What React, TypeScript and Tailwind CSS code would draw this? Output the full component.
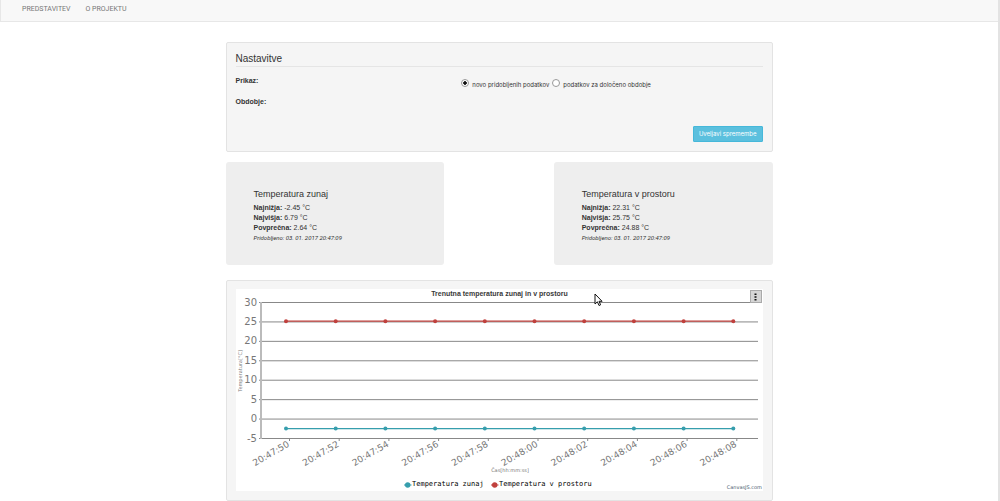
const times = [
  "20:47:50",
  "20:47:52",
  "20:47:54",
  "20:47:56",
  "20:47:58",
  "20:48:00",
  "20:48:02",
  "20:48:04",
  "20:48:06",
  "20:48:08",
];
const ticks = [30, 25, 20, 15, 10, 5, 0, -5];

const series = [
  { name: "Temperatura v prostoru", color: "#c0403d", value: 25.2 },
  { name: "Temperatura zunaj", color: "#369ead", value: -2.45 },
];

const yPos = (v: number) => 13.5 + ((30 - v) * 136) / 35;
const xPos = (i: number) => 50 + i * 49.7;

type Stats = { title: string; min: string; max: string; avg: string; taken: string };

function StatBox({ title, min, max, avg, taken, className }: Stats & { className: string }) {
  return (
    <section className={`rounded-[3px] bg-[#eee] px-7 pt-[27px] pb-[22px] leading-[10px] ${className}`}>
      <h3 className="mb-1 text-[9px] leading-[10px]">{title}</h3>
      <p><b>Najnižja:</b> {min} °C</p>
      <p><b>Najvišja:</b> {max} °C</p>
      <p><b>Povprečna:</b> {avg} °C</p>
      <p className="font-[Roboto,sans-serif] text-[6px] leading-[10px] italic">Pridobljeno: {taken}</p>
    </section>
  );
}

function Radio({ id, label, checked }: { id: string; label: string; checked?: boolean }) {
  return (
    <span className="flex items-baseline gap-[3px]">
      <input
        type="radio"
        name="prikaz"
        id={id}
        defaultChecked={checked}
        className="size-2 appearance-none rounded-full border border-[#999] bg-white checked:bg-[radial-gradient(circle,#111_0_1.5px,transparent_2px)]"
      />
      <label htmlFor={id}>{label}</label>
    </span>
  );
}

function Chart() {
  return (
    <svg viewBox="0 0 527 202" className="block w-full bg-white" fontFamily="'DejaVu Sans', sans-serif">
      <text x="263.5" y="7" textAnchor="middle" fontSize="7" fontWeight="bold" fill="#3a3a3a" fontFamily="'Liberation Sans', sans-serif">
        Trenutna temperatura zunaj in v prostoru
      </text>

      {ticks.map((t) => (
        <g key={t}>
          <line x1="23" x2="522" y1={yPos(t)} y2={yPos(t)} stroke="#888" />
          <text x="21" y={yPos(t) + 3} textAnchor="end" fontSize="10" fill="#777">{t}</text>
        </g>
      ))}
      <line x1="25" x2="25" y1="13" y2="150" stroke="#bbb" strokeWidth="2" />

      {times.map((t, i) => (
        <g key={t}>
          <line x1={xPos(i) + 3.5} x2={xPos(i) + 3.5} y1="149" y2="152" stroke="#888" />
          <text transform={`translate(${xPos(i) + 4} 157) rotate(-30)`} textAnchor="end" fontSize="9" fill="#777">{t}</text>
        </g>
      ))}

      {series.map((s) => (
        <g key={s.name} fill={s.color}>
          <line x1={xPos(0)} x2={xPos(9)} y1={yPos(s.value)} y2={yPos(s.value)} stroke={s.color} strokeWidth="1.4" />
          {times.map((t, i) => (
            <circle key={t} cx={xPos(i)} cy={yPos(s.value)} r="2" />
          ))}
        </g>
      ))}

      <text transform="translate(6 82) rotate(-90)" textAnchor="middle" fontSize="5" fill="#777">Temperatura[°C]</text>
      <text x="274" y="183" textAnchor="middle" fontSize="5" fill="#777">Čas[hh:mm:ss]</text>

      <g fontSize="7" fontFamily="'DejaVu Sans Mono', monospace">
        <path d="M168 196h7.500" stroke="#369ead" />
        <circle cx="171.700" cy="196" r="2.700" fill="#369ead" />
        <text x="176" y="197">Temperatura zunaj</text>
        <path d="M255 196h7.500" stroke="#c0403d" />
        <circle cx="258.700" cy="196" r="2.700" fill="#c0403d" />
        <text x="263" y="197">Temperatura v prostoru</text>
      </g>
      <text x="526" y="200" textAnchor="end" fontSize="5" fill="#4a6070">CanvasJS.com</text>
    </svg>
  );
}

export default function App() {
  return (
    <div className="min-h-screen border-r-2 border-[#e3e3e3] bg-white font-['Liberation_Sans',Arial,sans-serif] text-[7px] leading-[10px] text-[#333]">
      <nav className="flex gap-[15px] border-b border-l border-[#e7e7e7] bg-[#f8f8f8] px-[21px] pt-1 pb-[7px] font-[Roboto,sans-serif] text-[#777]">
        <a href="#predstavitev">PREDSTAVITEV</a>
        <a href="#projekt">O PROJEKTU</a>
      </nav>

      <div className="pt-5">
        <main className="mx-auto max-w-[547px]">
          <form className="rounded-[2px] border border-[#e3e3e3] bg-[#f5f5f5] px-[9px] pt-2 pb-[9px]">
            <h2 className="border-b border-[#e5e5e5] text-[10px] leading-[15px]">Nastavitve</h2>
            <div className="mt-[9px] grid min-h-3.5 grid-cols-[3fr_4fr]">
              <b>Prikaz:</b>
              <div className="flex gap-[3px] pt-[3px] font-[Inter,sans-serif] text-[6px] leading-[10px]">
                <Radio id="novi" label="novo pridobljenih podatkov" checked />
                <Radio id="obdobje" label="podatkov za določeno obdobje" />
              </div>
            </div>
            <p className="mt-[7px] font-bold">Obdobje:</p>
            <div className="mt-[19px] flex justify-end">
              <button type="button" className="rounded-[1px] border border-[#46b8da] bg-[#5bc0de] px-[5px] py-0.5 font-[Inter,sans-serif] text-[6px] leading-[10px] text-white">
                Uveljavi spremembe
              </button>
            </div>
          </form>

          <div className="mt-2.5 grid grid-cols-5">
            <StatBox className="col-span-2" title="Temperatura zunaj" min="-2.45" max="6.79" avg="2.64" taken="03. 01. 2017 20:47:09" />
            <StatBox className="col-span-2 col-start-4" title="Temperatura v prostoru" min="22.31" max="25.75" avg="24.88" taken="03. 01. 2017 20:47:09" />
          </div>

          <section className="mt-[15px] rounded-[2px] border border-[#e3e3e3] bg-[#f5f5f5] px-[9px] pt-2 pb-[9px]">
            <div className="relative">
              <Chart />
              <button type="button" aria-label="Meni" className="absolute top-px right-px flex h-[13px] w-3 items-center justify-center border border-[#aaa] bg-[#d5d5d5]">
                <svg viewBox="0 0 3 8" className="h-2 w-[3px]" fill="#111">
                  <path d="M0.500 0.500h2v1.500h-2zM0.500 3.200h2v1.500h-2zM0.500 6h2v1.500h-2z" />
                </svg>
              </button>
              <svg viewBox="0 0 9 14" className="absolute top-1 left-[68%] h-3.5 w-[9px]">
                <path d="M1 1v10l2.400-2.200 1.600 3.700 1.600-.7-1.600-3.500h3.100z" fill="#fff" stroke="#111" />
              </svg>
            </div>
          </section>
        </main>
      </div>
    </div>
  );
}
